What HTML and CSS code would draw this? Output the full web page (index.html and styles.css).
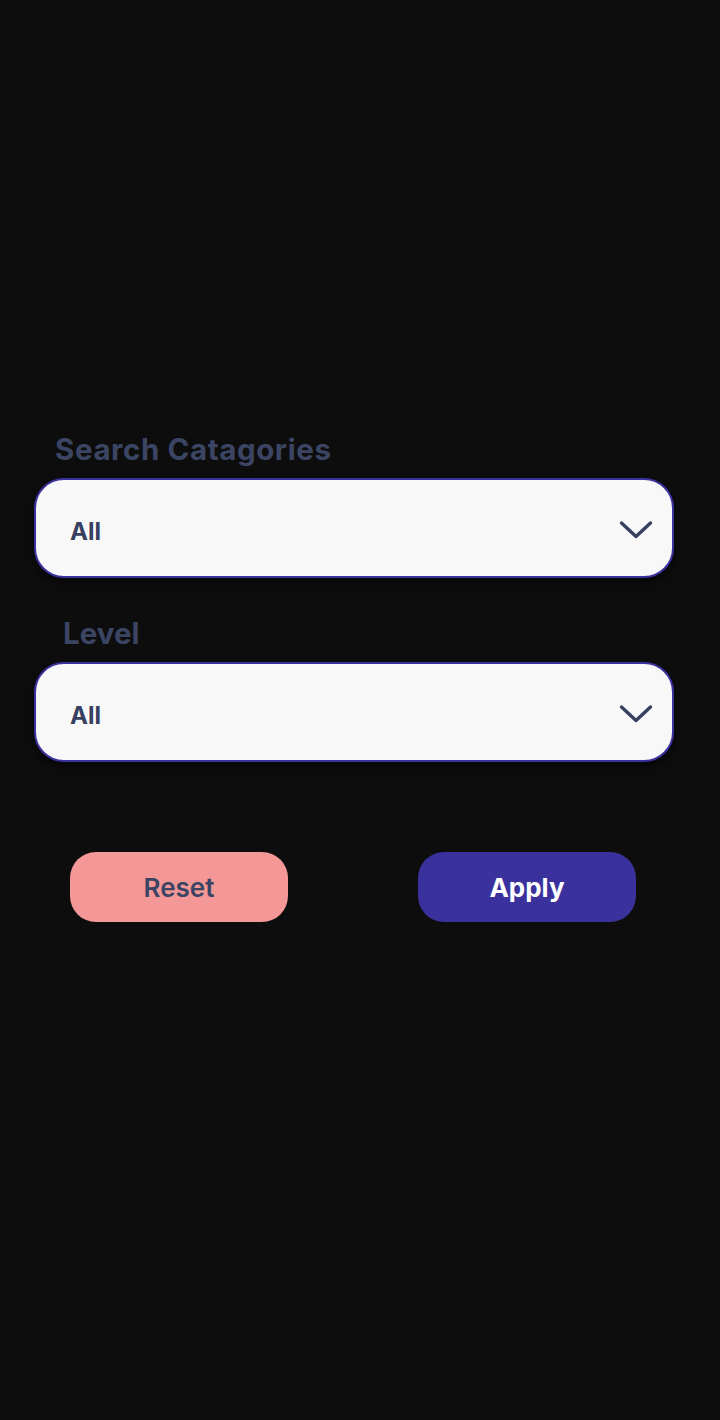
FILE: index.html
```html
<!DOCTYPE html>
<html lang="en">
<head>
<meta charset="utf-8">
<title>Filters</title>
<link rel="stylesheet" href="styles.css">
</head>
<body>
<main class="filters">
  <section class="field field-cat">
    <label class="label label-cat">Search Catagories</label>
    <div class="select">
      <span class="value">All</span>
      <svg class="chev" width="34" height="20" viewBox="0 0 34 20"><path d="M2.5 3 L17 16.5 L31.5 3" fill="none" stroke="#374060" stroke-width="3.4" stroke-linecap="round" stroke-linejoin="round"/></svg>
    </div>
  </section>
  <section class="field field-level">
    <label class="label label-level">Level</label>
    <div class="select">
      <span class="value">All</span>
      <svg class="chev" width="34" height="20" viewBox="0 0 34 20"><path d="M2.5 3 L17 16.5 L31.5 3" fill="none" stroke="#374060" stroke-width="3.4" stroke-linecap="round" stroke-linejoin="round"/></svg>
    </div>
  </section>
  <div class="actions">
    <button class="btn btn-reset">Reset</button>
    <button class="btn btn-apply">Apply</button>
  </div>
</main>
</body>
</html>
```
FILE: styles.css
```css
html, body {
  margin: 0;
  padding: 0;
  background: #0d0d0d;
  height: 100%;
}
body {
  font-family: Inter, "Noto Sans", sans-serif;
}
.filters {
  padding: 430px 46px 0 34px;
  display: flex;
  flex-direction: column;
}
.field {
  display: flex;
  flex-direction: column;
}
.label {
  color: #3b4563;
  font-size: 29.5px;
  font-weight: 700;
  line-height: 38px;
  padding-left: 21px;
  margin-bottom: 10px;
}
.label-cat {
  letter-spacing: 0.6px;
}
.label-level {
  padding-left: 29px;
}
.field-level {
  margin-top: 36px;
}
.select {
  box-sizing: border-box;
  height: 100px;
  border: 2px solid #3b32a0;
  border-radius: 30px;
  background: #f8f8f9;
  box-shadow: 0 4px 10px rgba(0,0,0,0.6);
  display: flex;
  align-items: center;
  justify-content: space-between;
  padding: 0 19px 0 34px;
}
.value {
  color: #374060;
  font-size: 24px;
  font-weight: 700;
  margin-top: 6px;
}
.chev {
  display: block;
  margin-top: 4px;
}
.actions {
  display: flex;
  justify-content: space-between;
  padding: 0 38px 0 36px;
  margin-top: 90px;
}
.btn {
  width: 218px;
  height: 70px;
  border: none;
  border-radius: 26px;
  font-family: Inter, "Noto Sans", sans-serif;
  font-size: 26px;
  font-weight: 600;
  cursor: pointer;
}
.btn-reset {
  background: #f39896;
  color: #3b4563;
}
.btn-apply {
  background: #3a319c;
  color: #ffffff;
  font-weight: 700;
}
```
